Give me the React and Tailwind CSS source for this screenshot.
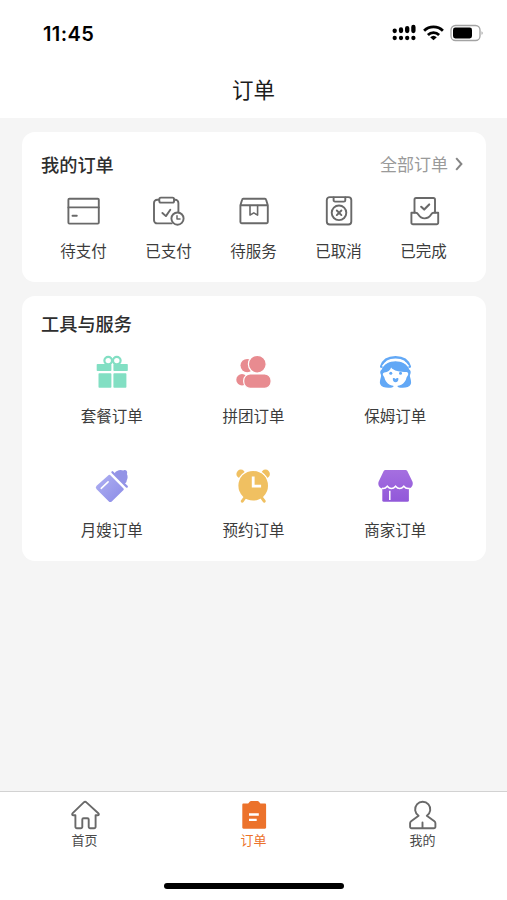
import React from "react";

function Glyph({ w, h, children, className = "", ...rest }) {
  return (
    <svg width={w} height={h} viewBox={`0 0 ${w} ${h}`} fill="none" className={`block shrink-0 ${className}`} {...rest}>
      {children}
    </svg>
  );
}

function OutlineGlyph({ w = 37, h = 36, children }) {
  return (
    <Glyph w={w} h={h} stroke="#696969" strokeWidth="1.9" strokeLinecap="round" strokeLinejoin="round">
      {children}
    </Glyph>
  );
}

const orders = [
  {
    label: "待支付",
    icon: (
      <OutlineGlyph>
        <rect x="3.4" y="5.7" width="30.4" height="24.9" rx="1" />
        <path d="M3.4 14.4H33.8M7.5 22.7h4.3" />
      </OutlineGlyph>
    ),
  },
  {
    label: "已支付",
    icon: (
      <OutlineGlyph>
        <path d="M9 6.7H7.2A3.2 3.2 0 0 0 4 9.9v17.3a3.2 3.2 0 0 0 3.2 3.2h14.4M24 6.7h1.2a3.2 3.2 0 0 1 3.2 3.2v8.8" />
        <rect x="9.3" y="4.6" width="14.8" height="5" rx="1.6" />
        <path d="m12.4 20 3.5 3.1 4.4-6.4" />
        <circle cx="27.5" cy="25.6" r="6.1" />
        <path d="M27 22.8v3.3h3" strokeWidth="1.5" />
      </OutlineGlyph>
    ),
  },
  {
    label: "待服务",
    icon: (
      <OutlineGlyph>
        <path d="M5.4 12.3V29a1.2 1.2 0 0 0 1.2 1.2h25a1.2 1.2 0 0 0 1.2-1.2V12.3zM5.4 12.3l1.7-5.6a1.2 1.2 0 0 1 1.2-.9h21.6a1.2 1.2 0 0 1 1.2.9l1.7 5.6" />
        <path d="M15 12.5v9.6l3.8-2.2 3.8 2.2v-9.6" strokeWidth="1.6" />
      </OutlineGlyph>
    ),
  },
  {
    label: "已取消",
    icon: (
      <OutlineGlyph>
        <rect x="6.8" y="4.1" width="24.5" height="27.4" rx="3" />
        <path d="M13.6 4.4v2.8A1.4 1.4 0 0 0 15 8.6h8.9a1.4 1.4 0 0 0 1.4-1.4V4.4" />
        <circle cx="19" cy="19.8" r="7.3" />
        <path d="m16.8 17.5 4.6 4.6m0-4.6-4.6 4.6" />
      </OutlineGlyph>
    ),
  },
  {
    label: "已完成",
    icon: (
      <OutlineGlyph>
        <path d="M9.5 19.5V6.6A1.6 1.6 0 0 1 11.1 5h17.3A1.6 1.6 0 0 1 30 6.6v12.9" />
        <path d="M6.4 19.8h4.3c1.4 0 2 .8 2.6 1.8 1.4 2.4 3.6 3.8 6.4 3.8s5-1.4 6.4-3.8c.6-1 1.2-1.8 2.6-1.8h4.5v9.9a1.6 1.6 0 0 1-1.6 1.6H8a1.6 1.6 0 0 1-1.6-1.6z" />
        <path d="m16.2 13.8 3 2.8 5-5.2" strokeWidth="2.1" />
      </OutlineGlyph>
    ),
  },
];

const tools = [
  {
    label: "套餐订单",
    icon: (
      <Glyph w={40} h={40}>
        <g stroke="#82dfc3" strokeWidth="2.2">
          <circle cx="16.2" cy="8.6" r="3.8" />
          <circle cx="24.8" cy="8.6" r="3.8" />
        </g>
        <g fill="#82dfc3">
          <rect x="4.7" y="12" width="14.7" height="7" rx=".8" />
          <rect x="21.4" y="12" width="14.4" height="7" rx=".8" />
          <rect x="6.5" y="21.2" width="12.9" height="14.6" rx=".8" />
          <rect x="21.4" y="21.2" width="13" height="14.6" rx=".8" />
        </g>
      </Glyph>
    ),
  },
  {
    label: "拼团订单",
    icon: (
      <Glyph w={40} h={40}>
        <g fill="#e88b90">
          <circle cx="14.2" cy="13.6" r="6.7" />
          <circle cx="9" cy="27.8" r="5.7" />
          <g stroke="#fff" strokeWidth="1.2">
            <circle cx="24.3" cy="12.2" r="8.9" />
            <rect x="10.7" y="21.9" width="27.4" height="14.4" rx="6.5" />
          </g>
        </g>
      </Glyph>
    ),
  },
  {
    label: "保姆订单",
    icon: (
      <Glyph w={41} h={40}>
        <path d="M6.2 14.6C8 8.4 13.6 5.2 20.5 5.200s12.500 3.200 14.300 9.400" stroke="#62a8f6" strokeWidth="2.6" strokeLinecap="round" />
        <path d="M7 17.2C7.700 12 13.200 9 20.500 9S33.300 12 34 17.200c1.700.9 2.200 3 1.300 5-.4.800-.6 1.500-.1 3.200.6 2.500 1.500 4.900.4 7.200-1.100 2.400-4.800 3.300-8.900 3.100-1.800-.1-3.700-.4-4.500-1.300-.5-.6-2.900-.6-3.400 0-.8.9-2.700 1.200-4.500 1.300-4.100.2-7.800-.7-8.900-3.100-1.100-2.300-.2-4.700.4-7.200.5-1.700.3-2.400-.1-3.200-.9-2-.4-4.100 1.300-5Z" fill="#62a8f6" />
        <path d="M9.400 20.600c3.300-.2 5.900-2.300 6.700-5.100 2.400 3.300 8.800 4.600 15.500 4.600 1.800.1 2.200 2.800.7 4.100-.8.7-.8 2.200-1.500 3.700-1.200 2.500-3.600 4.800-6.600 5.700-1 .3-2.100.5-3.700.5s-2.700-.2-3.700-.5c-3-.9-5.400-3.200-6.600-5.700-.7-1.500-.7-3-1.500-3.700-1.400-1.200-1.100-3.500.7-3.600Z" fill="#fff" />
        <path d="M18.200 32.5h4.600l-.6 3.700h-3.400Z" fill="#fff" />
        <circle cx="15.8" cy="21.2" r="1.5" fill="#62a8f6" />
        <circle cx="25.500" cy="21.200" r="1.500" fill="#62a8f6" />
        <path d="M17.800 26.400c1-.6 2-.2 2.800.5.800-.7 1.800-1.100 2.800-.5.200 2-1 3.800-2.800 3.800s-3-1.800-2.800-3.800Z" fill="#62a8f6" />
        <path d="M7.500 14.400C10 10.300 14.800 8.300 20.500 8.300s10.500 2 13 6.100" stroke="#fff" strokeWidth="1.700" />
      </Glyph>
    ),
  },
  {
    label: "月嫂订单",
    icon: (
      <Glyph w={40} h={40}>
        <defs>
          <linearGradient id="bottle" x1="8" y1="14" x2="28" y2="34" gradientUnits="userSpaceOnUse">
            <stop stopColor="#a9aaf0" />
            <stop offset="1" stopColor="#8f8fe8" />
          </linearGradient>
        </defs>
        <path d="M16.7 9.1a1 1 0 0 1 1.4 0l13.4 13.4a1 1 0 0 1 0 1.4L20 35.2a2.4 2.400 0 0 1-3.400 0L4.600 23.200a2.400 2.400 0 0 1 0-3.400Z" fill="url(#bottle)" />
        <path d="m20.400 6.200 14.400 14.400" stroke="#9393e6" strokeWidth="2.200" strokeLinecap="round" />
        <path d="M23.200 8.300c-.7-1.500.300-2.800 1.900-3.200 1.800-1.200 4.100-1.300 6-.5l.9-.4c1.700-.6 3.400.9 3.200 2.700l-.3 1.200c1 2.100 1 4.500-.2 6.300 0 1.900-1.100 3.200-3 2.700Z" fill="#9393e6" />
        <path d="m9.200 22.300 6.900-6.400" stroke="#fff" strokeWidth="1.600" strokeLinecap="round" />
      </Glyph>
    ),
  },
  {
    label: "预约订单",
    icon: (
      <Glyph w={40} h={40}>
        <g fill="#f0c061">
          <circle cx="7.800" cy="8" r="4.400" />
          <circle cx="32.500" cy="8" r="4.400" />
        </g>
        <circle cx="20.200" cy="19.700" r="15.400" stroke="#fff" strokeWidth="1.500" />
        <path d="m12.300 31-3 4.200M28.200 31l3 4.200" stroke="#f0c061" strokeWidth="3" strokeLinecap="round" />
        <circle cx="20.200" cy="19.700" r="14.800" fill="#f0c061" />
        <path d="M20.200 10.400v9.800h7.900" stroke="#fff" strokeWidth="2.800" />
      </Glyph>
    ),
  },
  {
    label: "商家订单",
    icon: (
      <Glyph w={41} h={40}>
        <defs>
          <linearGradient id="shop" x1="20" y1="4" x2="20" y2="36" gradientUnits="userSpaceOnUse">
            <stop stopColor="#a56fe0" />
            <stop offset="1" stopColor="#9158d9" />
          </linearGradient>
        </defs>
        <path d="M7.300 20h26.600v14.200a1.500 1.500 0 0 1-1.500 1.500H8.800a1.500 1.500 0 0 1-1.500-1.500Z" fill="url(#shop)" />
        <path d="M10.500 4h20a2 2 0 0 1 1.800 1.100l5.200 10.700c1.200 3.700-1.400 6.800-4.600 6.800-1.800 0-3-.8-4.100-1.800-1.200 1-2.400 1.800-4.100 1.800s-3-.8-4.100-1.800c-1.200 1-2.500 1.800-4.200 1.800s-2.900-.8-4.100-1.800c-1.100 1-2.400 1.800-4.100 1.800-3.200 0-5.800-3.100-4.600-6.800L8.700 5.100A2 2 0 0 1 10.500 4Z" fill="url(#shop)" />
        <path d="M7 22.300c2.200.5 4-.5 5.300-2.100 1.200 1.400 2.400 2.300 4.100 2.300s3-.9 4.200-2.300c1.100 1.400 2.400 2.300 4.100 2.300s2.900-.9 4.100-2.300c1.200 1.600 3.200 2.600 5.800 2.100" stroke="#fff" strokeWidth="1.500" />
        <path d="M14.800 24.800v9.200" stroke="#fff" strokeWidth="1.500" />
      </Glyph>
    ),
  },
];

const tabs = [
  {
    label: "首页",
    icon: (
      <OutlineGlyph w={33} h={32}>
        <path d="M17.100 2.800c.5 0 .9.200 1.300.6l11.900 10.800c1 1 .6 2-.7 2h-2v11.600a1.500 1.500 0 0 1-1.500 1.500h-3.900a1.500 1.500 0 0 1-1.500-1.500v-7.200c0-.8-.5-1.300-1.300-1.300h-3.800c-.8 0-1.300.5-1.300 1.300v7.200a1.500 1.500 0 0 1-1.500 1.500H8.900a1.500 1.500 0 0 1-1.500-1.500V16.200h-2c-1.300 0-1.700-1-.7-2L15.800 3.400c.4-.4.800-.6 1.300-.6Z" />
      </OutlineGlyph>
    ),
  },
  {
    label: "订单",
    active: true,
    icon: (
      <Glyph w={33} h={32}>
        <path d="M6.500 4.600h4.700l1.700-2.100c.3-.3.700-.5 1.100-.5h6.600c.4 0 .8.200 1.100.5l1.700 2.100h4.500c.7 0 1.200.5 1.200 1.200v22.700c0 .7-.5 1.200-1.200 1.200H6.500c-.7 0-1.200-.5-1.200-1.200V5.800c0-.7.5-1.200 1.200-1.200Z" fill="#ec722b" />
        <path d="M12 15.500h9.800M12 20.800h7.700" stroke="#fff" strokeWidth="2.300" />
      </Glyph>
    ),
  },
  {
    label: "我的",
    icon: (
      <OutlineGlyph w={33} h={32}>
        <path d="M12.600 16.700a7.600 7.600 0 1 1 8.200 0l7.600 5.600c.7.5 1 1.200 1 2v3.500a1.500 1.500 0 0 1-1.500 1.500H5.600a1.500 1.500 0 0 1-1.500-1.500v-3.500c0-.8.3-1.500 1-2ZM16.500 23.500v5.500" />
      </OutlineGlyph>
    ),
  },
];

function StatusBar() {
  return (
    <div className="flex h-[66px] items-center justify-between pl-[43px] pr-[23px]">
      <span className="mt-px font-[Inter,sans-serif] text-[20px] font-semibold leading-6 tracking-[0.4px] text-black">11:45</span>
      <div className="flex items-center">
        <Glyph w={24} h={18} stroke="#000" strokeWidth="4.300" strokeLinecap="round">
          <path d="M2.700 6.600v.5M9 5.400v1.700M15.200 4.100v3M21.400 2.900v4.200M2.700 14h.01M9 14h.01M15.200 14h.01M21.400 14h.01" />
        </Glyph>
        <Glyph w={24} h={18} stroke="#000" strokeWidth="2.800" className="ml-[5px]">
          <path d="M3.100 6.700a13.600 13.600 0 0 1 18.800 0M6.900 10.900a8.100 8.100 0 0 1 11.200 0" />
          <path d="M12.500 16.300 9.200 13.200a4.800 4.800 0 0 1 6.600 0Z" fill="#000" stroke="none" />
        </Glyph>
        <Glyph w={34} h={18} className="ml-[5px]">
          <rect x="1" y="1.500" width="29" height="15" rx="4.500" stroke="#a3a3a3" strokeWidth="1.300" />
          <rect x="3" y="3.600" width="19" height="10.800" rx="2.300" fill="#000" />
          <path d="M31.600 7.200c1.300.4 1.300 3.200 0 3.600Z" fill="#8b8b8b" />
        </Glyph>
      </div>
    </div>
  );
}

export default function App() {
  return (
    <div className="flex h-[900px] w-[507px] flex-col overflow-hidden bg-[#f5f5f5] font-['Noto_Sans_CJK_SC',sans-serif] text-[#3c3c3c]">
      <header className="h-[118px] bg-white">
        <StatusBar />
        <h1 className="pt-[7px] text-center text-[21.5px] leading-8 text-[#1c1c1c]">订单</h1>
      </header>

      <main className="flex flex-1 flex-col gap-[14px] px-[22px] pt-[14px]">
        <section className="h-[150px] w-[464px] rounded-[13px] bg-white px-[19px] pt-[20px]">
          <div className="flex h-6 items-center justify-between">
            <h2 className="text-[18.2px] font-medium leading-6 text-[#2e2e2e]">我的订单</h2>
            <div className="flex items-center gap-[6px] pr-[3px] text-[17px] leading-6 text-[#9a9a9a]">
              <span>全部订单</span>
              <Glyph w={10} h={16} stroke="#858585" strokeWidth="2">
                <path d="m2.200 2.200 5.200 5.800-5.200 5.800" />
              </Glyph>
            </div>
          </div>
          <div className="mt-[17px] grid w-[425px] grid-cols-5">
            {orders.map((item) => (
              <div key={item.label} className="flex flex-col items-center">
                {item.icon}
                <span className="mt-[9px] text-[15.5px] leading-6">{item.label}</span>
              </div>
            ))}
          </div>
        </section>

        <section className="h-[265px] w-[464px] rounded-[13px] bg-white px-[19px] pt-[15px]">
          <h2 className="text-[18.2px] font-medium leading-6 text-[#2e2e2e]">工具与服务</h2>
          <div className="mt-[17px] grid w-[425px] grid-cols-3 gap-y-[39px]">
            {tools.map((item) => (
              <div key={item.label} className="flex h-[75px] flex-col items-center justify-between">
                {item.icon}
                <span className="text-[15.5px] leading-6">{item.label}</span>
              </div>
            ))}
          </div>
        </section>
      </main>

      <footer className="flex h-[109px] flex-col items-center border-t border-[#d2d2d2] bg-white">
        <nav className="grid w-full grid-cols-3 pt-[7px]">
          {tabs.map((tab) => (
            <div
              key={tab.label}
              className={`flex flex-col items-center ${tab.active ? "text-[#ec722b]" : "text-[#4a4a4a]"}`}
            >
              {tab.icon}
              <span className="text-[13px] leading-[18px]">{tab.label}</span>
            </div>
          ))}
        </nav>
        <div className="mt-[34px] h-[6px] w-[180px] rounded-full bg-black" />
      </footer>
    </div>
  );
}
